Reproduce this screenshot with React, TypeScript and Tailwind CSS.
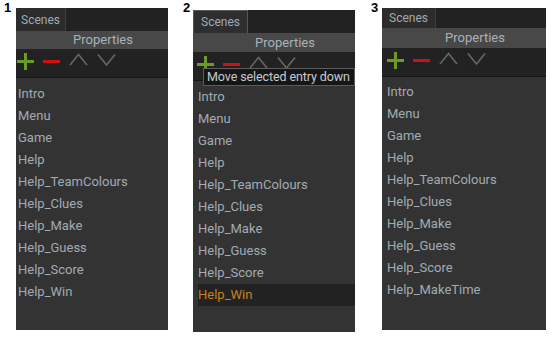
import React from "react";

const scenes = [
  "Intro",
  "Menu",
  "Game",
  "Help",
  "Help_TeamColours",
  "Help_Clues",
  "Help_Make",
  "Help_Guess",
  "Help_Score",
  "Help_Win",
];

const scenesAlt = [...scenes.slice(0, 9), "Help_MakeTime"];

function PlusIcon() {
  return (
    <svg width="17" height="17" viewBox="0 0 17 17" className="shrink-0">
      <rect x="0" y="7" width="17" height="3" fill="#6c9a26" />
      <rect x="7" y="0" width="3" height="17" fill="#6c9a26" />
    </svg>
  );
}

function MinusIcon() {
  return (
    <svg width="17" height="17" viewBox="0 0 17 17" className="shrink-0">
      <rect x="0" y="7" width="17" height="3" fill="#cc1212" />
    </svg>
  );
}

function ChevronIcon({ down }: { down?: boolean }) {
  return (
    <svg width="19" height="17" viewBox="0 0 19 17" className="shrink-0">
      <polyline
        points={down ? "1,1.5 9.5,12 18,1.5" : "1,12 9.5,1.5 18,12"}
        fill="none"
        stroke="#666666"
        strokeWidth="1.6"
      />
    </svg>
  );
}

type PanelProps = {
  items: string[];
  widthClass: string;
  topClass: string;
  tabClass: string;
  propsClass: string;
  toolbarClass: string;
  listClass: string;
  selected?: number;
  tooltip?: boolean;
};

function ScenesPanel({
  items,
  widthClass,
  topClass,
  tabClass,
  propsClass,
  toolbarClass,
  listClass,
  selected,
  tooltip,
}: PanelProps) {
  return (
    <div className={`relative flex flex-col h-[322px] bg-[#333333] ${widthClass} ${topClass}`}>
      <div className="flex bg-[#222222]">
        <div className={`flex items-center text-[12px] text-[#a0aab4] ${tabClass}`}>Scenes</div>
      </div>
      <div className={`flex items-center justify-center bg-[#484848] text-[13px] text-[#a8b2ba] pl-[22px] ${propsClass}`}>
        Properties
      </div>
      <div className={`flex items-start gap-[9px] bg-[#222222] border-b border-[#151515] h-[29px] pt-[4px] ${toolbarClass}`}>
        <PlusIcon />
        <MinusIcon />
        <ChevronIcon />
        <ChevronIcon down />
      </div>
      <div className={`flex flex-col ${listClass}`}>
        {items.map((name, i) => (
          <div
            key={name}
            className={`h-[22px] leading-[22px] text-[13px] ${
              i === selected ? "bg-[#222222] text-[#c4821c]" : "text-[#a2acb4]"
            }`}
          >
            {name}
          </div>
        ))}
      </div>
      {tooltip && (
        <div className="absolute left-[10px] top-[58px] w-[152px] h-[18px] flex items-center pl-[3px] bg-[#161616] border border-[#5c5c5c] text-[12.5px] tracking-[-0.1px] text-[#c4ccd4] whitespace-nowrap overflow-hidden">
          Move selected entry down
        </div>
      )}
    </div>
  );
}

function Label({ n, className }: { n: string; className: string }) {
  return (
    <div className={`text-[13px] font-bold leading-[13px] text-black font-['Liberation_Sans',sans-serif] ${className}`}>
      {n}
    </div>
  );
}

export default function App() {
  return (
    <div className="w-[560px] h-[337px] bg-white flex items-start font-['Roboto',sans-serif] overflow-hidden">
      <Label n="1" className="ml-[4px] w-[12px] pt-[1px]" />
      <ScenesPanel
        items={scenes}
        widthClass="w-[152px]"
        topClass="mt-[8px]"
        tabClass="h-[23px] px-[5px] bg-[#2c2c2c] border-r border-[#3e3e3e]"
        propsClass="h-[18px]"
        toolbarClass="pl-[1px]"
        listClass="pt-[5px] pl-[2px]"
      />
      <Label n="2" className="ml-[15px] w-[10px] pt-[1px]" />
      <ScenesPanel
        items={scenes}
        widthClass="w-[162px]"
        topClass="mt-[10px] h-[320px]"
        tabClass="h-[23px] px-[7px] bg-[#2e2e2e] border border-b-0 border-[#575757]"
        propsClass="h-[19px]"
        toolbarClass="pl-[4px]"
        listClass="pt-[5px] pl-[5px]"
        selected={9}
        tooltip
      />
      <Label n="3" className="ml-[16px] w-[11px] pt-[1px]" />
      <ScenesPanel
        items={scenesAlt}
        widthClass="w-[164px]"
        topClass="mt-[8px]"
        tabClass="h-[20px] px-[7px] bg-[#2c2c2c] border-r border-[#3e3e3e]"
        propsClass="h-[20px]"
        toolbarClass="pl-[5px]"
        listClass="pt-[4px] pl-[5px]"
      />
    </div>
  );
}
